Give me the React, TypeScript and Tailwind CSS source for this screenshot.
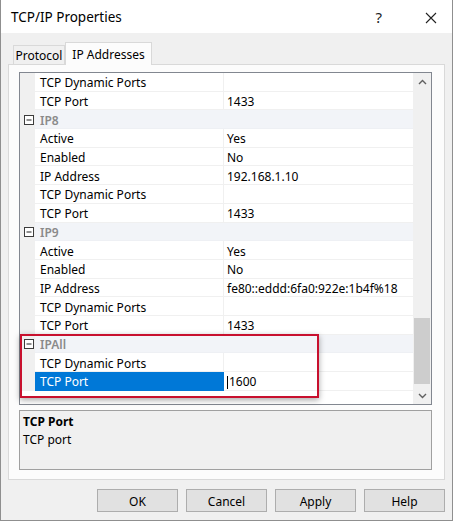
import React from 'react'

type Row =
  | { kind: 'prop'; name: string; value: string; selected?: boolean }
  | { kind: 'cat'; name: string }

const rows: Row[] = [
  { kind: 'prop', name: 'TCP Dynamic Ports', value: '' },
  { kind: 'prop', name: 'TCP Port', value: '1433' },
  { kind: 'cat', name: 'IP8' },
  { kind: 'prop', name: 'Active', value: 'Yes' },
  { kind: 'prop', name: 'Enabled', value: 'No' },
  { kind: 'prop', name: 'IP Address', value: '192.168.1.10' },
  { kind: 'prop', name: 'TCP Dynamic Ports', value: '' },
  { kind: 'prop', name: 'TCP Port', value: '1433' },
  { kind: 'cat', name: 'IP9' },
  { kind: 'prop', name: 'Active', value: 'Yes' },
  { kind: 'prop', name: 'Enabled', value: 'No' },
  { kind: 'prop', name: 'IP Address', value: 'fe80::eddd:6fa0:922e:1b4f%18' },
  { kind: 'prop', name: 'TCP Dynamic Ports', value: '' },
  { kind: 'prop', name: 'TCP Port', value: '1433' },
  { kind: 'cat', name: 'IPAll' },
  { kind: 'prop', name: 'TCP Dynamic Ports', value: '' },
  { kind: 'prop', name: 'TCP Port', value: '1600', selected: true },
]

function MinusBox() {
  return (
    <svg width="10" height="10" viewBox="0 0 10 10" className="block">
      <rect x="0.5" y="0.5" width="9" height="9" fill="#fff" stroke="#3c3c3c" />
      <path d="M2.5 5h5" stroke="#1e1e1e" strokeWidth="1" />
    </svg>
  )
}

function Chevron({ up }: { up?: boolean }) {
  return (
    <svg width="9" height="6" viewBox="0 0 9 6" className="block">
      <path d={up ? 'M1 5l3.5-3.5L8 5' : 'M1 1l3.5 3.5L8 1'} fill="none" stroke="#606060" strokeWidth="1.4" />
    </svg>
  )
}

function GridRow({ row }: { row: Row }) {
  if (row.kind === 'cat') {
    return (
      <div className="flex h-[18.7px]">
        <div className="flex w-[15px] shrink-0 items-center justify-center bg-[#f0f0f0] pl-[2px]">
          <MinusBox />
        </div>
        <div className="flex flex-1 items-center border-b border-[#eef0f4] bg-[#f2f4f8] pl-[5px] pt-[3px] font-semibold text-[#8a8a8a]">
          {row.name}
        </div>
      </div>
    )
  }
  return (
    <div className="flex h-[18.7px]">
      <div className="w-[15px] shrink-0 bg-[#f0f0f0]" />
      <div
        className={`flex w-[189px] shrink-0 items-center border-b border-r pl-[5px] pt-[3px] ${
          row.selected ? 'border-[#0078d7] bg-[#0078d7] text-white' : 'border-[#f0f0f0] text-black'
        }`}
      >
        {row.name}
      </div>
      <div className="flex flex-1 items-center border-b border-[#f0f0f0] pl-[3px] pt-[3px] text-black">
        {row.selected ? <span className="mr-[1px] inline-block h-[13px] w-px bg-black" /> : null}
        {row.value}
      </div>
    </div>
  )
}

function Button({ label }: { label: string }) {
  return (
    <button
      type="button"
      className="flex h-[23px] w-[81px] items-center justify-center border border-[#adadad] bg-[#e1e1e1] pt-[2px] text-[12px] text-black"
    >
      {label}
    </button>
  )
}

export default function App() {
  return (
    <div className="relative h-[522px] w-[455px] bg-white font-['Segoe_UI','Noto_Sans',sans-serif] text-[12px] leading-none">
      <div className="flex h-[521px] w-[453px] flex-col border border-t-0 border-[#8f8f8f] bg-[#f0f0f0]">
        {/* title bar */}
        <div className="flex h-[33px] shrink-0 items-center bg-white pl-[10px] pt-[2px]">
          <span className="text-[13.5px] text-black">TCP/IP Properties</span>
          <span className="ml-auto mr-[43px] text-[15px] text-[#222]">?</span>
          <svg width="12" height="12" viewBox="0 0 12 12" className="mr-[15px]">
            <path d="M1 1l10 10M11 1L1 11" stroke="#222" strokeWidth="1.1" />
          </svg>
        </div>

        {/* tabs */}
        <div className="relative mt-[9px] flex h-[22px] items-end pl-[12px]">
          <div className="flex h-[19px] w-[52px] items-center justify-center border border-b-0 border-[#d9d9d9] bg-[#f0f0f0] pt-[2px] text-black">
            Protocol
          </div>
          <div className="relative z-10 -mb-px flex h-[23px] w-[87px] items-center justify-center border border-b-0 border-[#d9d9d9] bg-[#fcfcfc] pt-[1px] text-black">
            IP Addresses
          </div>
        </div>

        {/* tab page */}
        <div className="ml-[7px] h-[416px] w-[437px] border border-[#d9d9d9] bg-[#fcfcfc] pl-[10px] pt-[7px]">
          <div className="flex h-[333px] w-[413px] border border-[#828790] bg-white">
            <div className="flex-1 overflow-hidden">
              {rows.map((r, i) => (
                <GridRow key={i} row={r} />
              ))}
            </div>
            <div className="flex w-[18px] shrink-0 flex-col bg-[#f0f0f0]">
              <div className="flex h-[17px] items-center justify-center">
                <Chevron up />
              </div>
              <div className="flex flex-1 flex-col justify-end px-px pb-[3px]">
                <div className="h-[66px] bg-[#cdcdcd]" />
              </div>
              <div className="flex h-[17px] items-center justify-center">
                <Chevron />
              </div>
            </div>
          </div>

          <div className="mt-[5px] flex h-[60px] w-[413px] flex-col gap-[6px] border border-[#a0a0a0] bg-[#f0f0f0] pl-[3px] pt-[5px] text-black">
            <span className="font-bold">TCP Port</span>
            <span>TCP port</span>
          </div>
        </div>

        {/* buttons */}
        <div className="mt-[9px] flex gap-[8px] pl-[96px]">
          <Button label="OK" />
          <Button label="Cancel" />
          <Button label="Apply" />
          <Button label="Help" />
        </div>
      </div>

      {/* annotation highlight */}
      <div className="absolute left-[20px] top-[334px] h-[64px] w-[299px] border-2 border-[#c8102e] shadow-[0_2px_6px_rgba(0,0,0,0.35)]" />
    </div>
  )
}
